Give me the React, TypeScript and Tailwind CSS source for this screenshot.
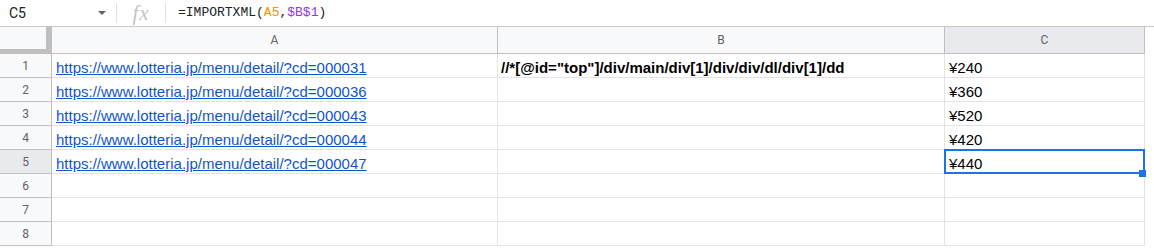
import React from "react";

const rows = [
  { n: 1, a: "https://www.lotteria.jp/menu/detail/?cd=000031", b: '//*[@id="top"]/div/main/div[1]/div/div/dl/div[1]/dd', c: "¥240" },
  { n: 2, a: "https://www.lotteria.jp/menu/detail/?cd=000036", b: "", c: "¥360" },
  { n: 3, a: "https://www.lotteria.jp/menu/detail/?cd=000043", b: "", c: "¥520" },
  { n: 4, a: "https://www.lotteria.jp/menu/detail/?cd=000044", b: "", c: "¥420" },
  { n: 5, a: "https://www.lotteria.jp/menu/detail/?cd=000047", b: "", c: "¥440" },
  { n: 6, a: "", b: "", c: "" },
  { n: 7, a: "", b: "", c: "" },
  { n: 8, a: "", b: "", c: "" },
];

export default function App() {
  return (
    <div className="w-[1154px] h-[248px] overflow-hidden bg-white" style={{ fontFamily: "Arial, 'Liberation Sans', sans-serif" }}>
      {/* formula bar */}
      <div className="flex h-[27px] items-center border-b border-[#c7c7c7]">
        <div className="flex w-[116px] items-center pl-[9px] pr-[8px] font-['Roboto',sans-serif] text-[14px] text-[#202124]">
          <span className="flex-1">C5</span>
          <svg width="8" height="4" viewBox="0 0 8 4" className="mr-[2px]">
            <path d="M0 0 L8 0 L4 4 Z" fill="#5f6368" />
          </svg>
        </div>
        <div className="h-[20px] w-px bg-[#e0e0e0]" />
        <div className="flex w-[48px] items-center justify-center">
          <span className="font-['Liberation_Serif',serif] text-[21px] italic leading-none text-[#c4c4c4] tracking-[1px]">fx</span>
        </div>
        <div className="h-[20px] w-px bg-[#e0e0e0]" />
        <div className="pl-[12px] font-['Liberation_Mono',monospace] text-[13px] text-[#202124]">
          =IMPORTXML(<span className="text-[#f09300]">A5</span>,<span className="text-[#9334e6]">$B$1</span>)
        </div>
      </div>

      {/* column headers */}
      <div className="flex h-[27px]">
        <div className="box-border h-[27px] w-[51px] border-b-[5px] border-r-[5px] border-[#bfbfbf] bg-[#f8f9fa]" />
        <div className="box-border flex h-[27px] w-[447px] items-center justify-center border-b border-l border-r border-[#c0c0c0] bg-[#f8f9fa] font-['Roboto',sans-serif] text-[12px] text-[#5f6368]">A</div>
        <div className="box-border flex h-[27px] w-[447px] items-center justify-center border-b border-r border-[#c0c0c0] bg-[#f8f9fa] font-['Roboto',sans-serif] text-[12px] text-[#5f6368]">B</div>
        <div className="box-border flex h-[27px] w-[200px] items-center justify-center border-b border-r border-[#c0c0c0] bg-[#e8eaed] font-['Roboto',sans-serif] text-[12px] text-[#5f6368]">C</div>
        <div className="flex-1" />
      </div>

      {/* body rows */}
      {rows.map((r) => (
        <div key={r.n} className="flex h-[24px]">
          <div
            className={
              r.n === 5
                ? "box-border flex h-[24px] w-[52px] items-center justify-center border-b border-r border-[#c0c0c0] bg-[#e8eaed] pt-[1px] font-['Roboto',sans-serif] text-[12px] text-[#5f6368]"
                : "box-border flex h-[24px] w-[52px] items-center justify-center border-b border-r border-[#c0c0c0] bg-[#f8f9fa] pt-[1px] font-['Roboto',sans-serif] text-[12px] text-[#5f6368]"
            }
          >
            {r.n}
          </div>
          <div className="box-border flex h-[24px] w-[446px] items-end overflow-hidden whitespace-nowrap border-b border-r border-[#e2e3e3] pb-0 pl-[4px] text-[15px] leading-[18px]">
            {r.a && <span className="text-[#1155cc] underline">{r.a}</span>}
          </div>
          <div className="box-border flex h-[24px] w-[447px] items-end overflow-hidden whitespace-nowrap border-b border-r border-[#e2e3e3] pb-0 pl-[3px] text-[15px] leading-[18px] font-bold text-black">
            {r.b}
          </div>
          <div
            className={
              r.n === 5
                ? "relative z-20 box-border flex h-[24px] w-[200px] items-end whitespace-nowrap border-b border-r border-[#e2e3e3] pb-0 pl-[4px] text-[15px] leading-[18px] text-black"
                : "relative box-border flex h-[24px] w-[200px] items-end whitespace-nowrap border-b border-r border-[#e2e3e3] pb-0 pl-[4px] text-[15px] leading-[18px] text-black"
            }
          >
            {r.c}
            {r.n === 5 && (
              <>
                <div className="pointer-events-none absolute left-[-1px] top-[-1px] h-[25px] w-[201px] border-2 border-[#1a73e8]" />
                <div className="absolute bottom-[-4px] right-[-2px] h-[7px] w-[7px] bg-[#1a73e8]" />
              </>
            )}
          </div>
          <div className="flex-1" />
        </div>
      ))}
    </div>
  );
}
